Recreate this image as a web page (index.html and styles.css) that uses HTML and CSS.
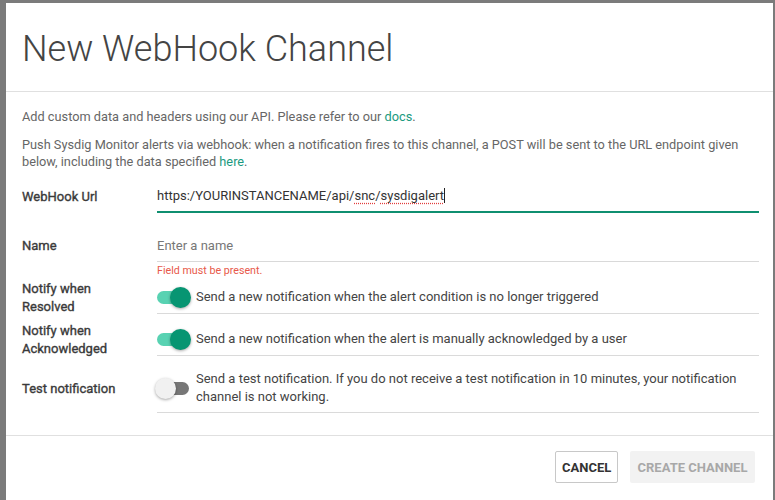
FILE: index.html
```html
<!DOCTYPE html>
<html>
<head>
<meta charset="utf-8">
<link rel="stylesheet" href="styles.css">
</head>
<body>
<div class="dialog">
  <div class="header"><h1 class="title">New WebHook Channel</h1></div>
  <div class="body">
    <p class="intro">Add custom data and headers using our API. Please refer to our <a class="link">docs</a>.</p>
    <p class="desc">Push Sysdig Monitor alerts via webhook: when a notification fires to this channel, a POST will be sent to the URL endpoint given below, including the data specified <a class="link">here</a>.</p>

    <div class="field-row url-row">
      <div class="label">WebHook Url</div>
      <div class="input focused">https:/YOURINSTANCENAME/api/<span class="spell">snc</span>/<span class="spell">sysdigalert</span><span class="caret"></span></div>
    </div>

    <div class="field-row name-row">
      <div class="label">Name</div>
      <div class="input placeholder">Enter a name</div>
    </div>
    <div class="error-row"><span class="error">Field must be present.</span></div>

    <div class="toggle-row r1">
      <div class="label two">Notify when<br>Resolved</div>
      <div class="control">
        <span class="toggle on"><span class="thumb"></span></span>
        <span class="ctext">Send a new notification when the alert condition is no longer triggered</span>
      </div>
    </div>
    <div class="toggle-row r2">
      <div class="label two">Notify when<br>Acknowledged</div>
      <div class="control">
        <span class="toggle on"><span class="thumb"></span></span>
        <span class="ctext">Send a new notification when the alert is manually acknowledged by a user</span>
      </div>
    </div>
    <div class="toggle-row r3">
      <div class="label">Test notification</div>
      <div class="control">
        <span class="toggle off"><span class="thumb"></span></span>
        <span class="ctext">Send a test notification. If you do not receive a test notification in 10 minutes, your notification channel is not working.</span>
      </div>
    </div>
  </div>
  <div class="footer">
    <button class="btn cancel">CANCEL</button>
    <button class="btn create">CREATE CHANNEL</button>
  </div>
</div>
</body>
</html>
```
FILE: styles.css
```css
html, body {
  margin: 0;
  padding: 0;
  height: 100%;
}
body {
  background: #7b7b7b;
  font-family: Roboto, "Liberation Sans", sans-serif;
  color: #555;
  overflow: hidden;
}
.dialog {
  background: #fff;
  margin: 3px 2px 0 6px;
  height: 497px;
  display: flex;
  flex-direction: column;
}
.header {
  height: 88px;
  border-bottom: 1px solid #e0e0e0;
  display: flex;
  align-items: center;
  padding: 0 16px;
  flex: none;
}
.title {
  margin: 0;
  font-weight: 300;
  font-size: 36px;
  color: #444;
  position: relative;
  top: 2px;
}
.body {
  padding: 16px 14px 0 16px;
  font-size: 13px;
}
p {
  margin: 0;
  color: #666;
  font-size: 12.75px;
  line-height: 17px;
}
.intro { margin-bottom: 11px; }
.link { color: #1a9a80; }
.field-row {
  display: flex;
  align-items: flex-start;
}
.label {
  width: 135px;
  flex: none;
  font-weight: 400;
  -webkit-text-stroke: 0.35px #3a3a3a;
  color: #3a3a3a;
  line-height: 17px;
}
.url-row { margin-top: 12px; }
.url-row .label { padding-top: 6px; }
.name-row { margin-top: 18px; }
.name-row .label { padding-top: 6px; }
.input {
  flex: 1;
  height: 30px;
  line-height: 30px;
  color: #333;
  border-bottom: 1px solid #d9d9d9;
}
.input.focused {
  border-bottom: 2px solid #0f8f70;
  height: 29px;
  line-height: 27px;
}
.input.placeholder { color: #777; }
.spell {
  text-decoration: underline dotted #e23c3c;
  text-underline-offset: 3px;
}
.caret {
  display: inline-block;
  width: 1px;
  height: 15px;
  background: #222;
  vertical-align: -3px;
}
.error-row {
  padding-left: 135px;
  line-height: 12px;
  margin-top: 2px;
}
.error {
  font-size: 10.7px;
  color: #e8594a;
}
.toggle-row {
  display: flex;
  align-items: center;
}
.toggle-row .label.two {
  line-height: 18px;
  margin: -2px 0;
}
.r1 { margin-top: 4px; }
.r2 { margin-top: 9px; }
.r3 { margin-top: 7px; }
.r3 .control { padding-bottom: 6px; }
.control {
  flex: 1;
  display: flex;
  align-items: center;
  padding: 7px 0;
  border-bottom: 1px solid #dadada;
  line-height: 18px;
  color: #444;
}
.toggle {
  flex: none;
  width: 32px;
  height: 13px;
  border-radius: 7px;
  position: relative;
  margin-right: 7px;
}
.toggle.on { background: #58d2b2; }
.toggle.off { background: #777; }
.thumb {
  position: absolute;
  top: -4px;
  width: 21px;
  height: 21px;
  border-radius: 50%;
  box-shadow: 0 1px 3px rgba(0,0,0,0.35);
}
.toggle.on .thumb { right: -2px; background: #079572; }
.toggle.off .thumb { left: -2px; background: #f1f1f1; }
.footer {
  margin-top: 22px;
  border-top: 1px solid #e0e0e0;
  padding: 15px 18px 0 0;
  display: flex;
  justify-content: flex-end;
  gap: 12px;
}
.btn {
  height: 32px;
  font-family: Roboto, "Liberation Sans", sans-serif;
  font-weight: 700;
  font-size: 13px;
  border-radius: 2px;
  padding: 0 6px;
}
.cancel {
  background: #fff;
  border: 1px solid #c8c8c8;
  color: #333;
  width: 63px;
}
.create {
  background: #f2f2f2;
  border: none;
  color: #a8a8a8;
  width: 125px;
}
```
